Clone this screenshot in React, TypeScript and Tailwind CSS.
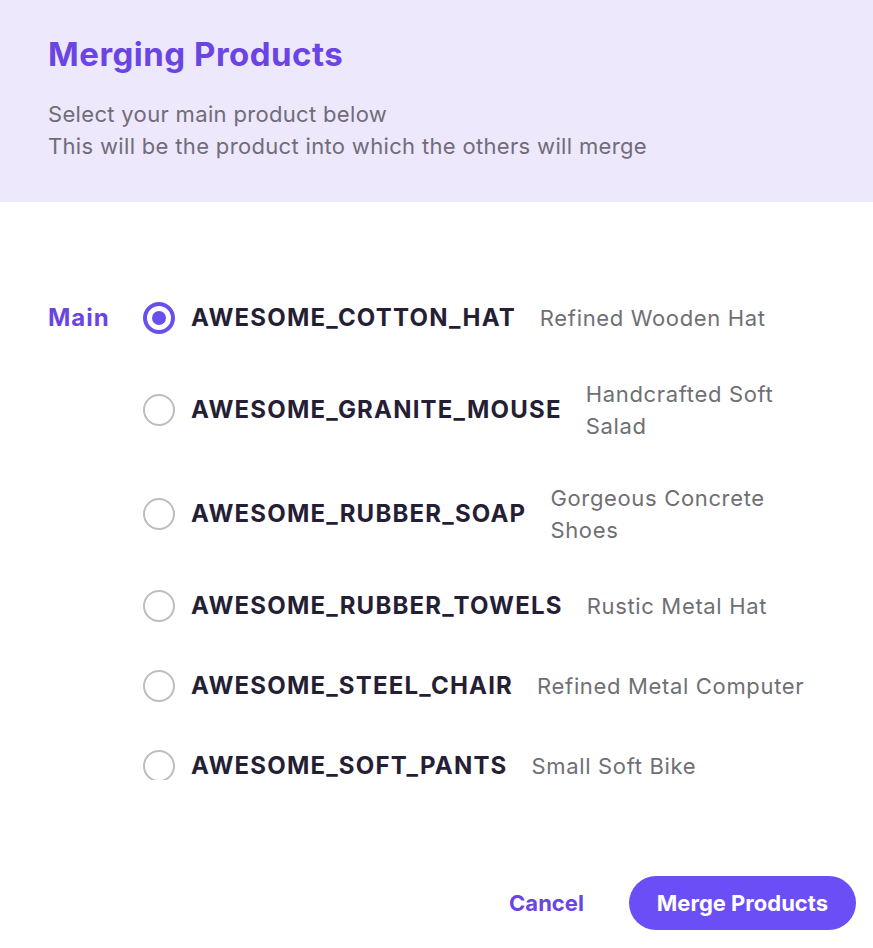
const products = [
  { code: "AWESOME_COTTON_HAT", name: "Refined Wooden Hat" },
  { code: "AWESOME_GRANITE_MOUSE", name: "Handcrafted Soft Salad" },
  { code: "AWESOME_RUBBER_SOAP", name: "Gorgeous Concrete Shoes" },
  { code: "AWESOME_RUBBER_TOWELS", name: "Rustic Metal Hat" },
  { code: "AWESOME_STEEL_CHAIR", name: "Refined Metal Computer" },
  { code: "AWESOME_SOFT_PANTS", name: "Small Soft Bike" },
];

function Radio({ checked }: { checked: boolean }) {
  if (checked) {
    return (
      <span className="flex h-8 w-8 shrink-0 items-center justify-center rounded-full border-4 border-[#6a4ff0]">
        <span className="h-[14px] w-[14px] rounded-full bg-[#6a4ff0]" />
      </span>
    );
  }
  return <span className="h-8 w-8 shrink-0 rounded-full border-2 border-[#bdbdbd]" />;
}

export default function App() {
  const selected = 0;

  return (
    <div className="flex h-[948px] w-[873px] flex-col bg-white font-['Inter',sans-serif]">
      <div className="bg-[#ede8fb] px-12 pb-10 pt-[34px]">
        <h1 className="text-[33px] font-bold leading-10 tracking-[0.015em] text-[#6a45e4]">
          Merging Products
        </h1>
        <div className="mt-[24px] text-[22px] leading-8 tracking-[0.015em] text-[#716c79]">
          <p>Select your main product below</p>
          <p>This will be the product into which the others will merge</p>
        </div>
      </div>

      <div className="mt-12 h-[530px] overflow-hidden pl-12 pr-[48px] pt-12">
        <div className="flex flex-col gap-10">
          {products.map((p, i) => (
            <div key={p.code} className="flex min-h-10 items-center">
              <span className="w-[95px] shrink-0 text-[24px] font-bold leading-7 tracking-[0.04em] text-[#6a45e4]">
                {i === 0 ? "Main" : ""}
              </span>
              <Radio checked={i === selected} />
              <span className="ml-4 shrink-0 text-[24px] font-bold leading-7 tracking-[0.05em] text-[#261e35]">
                {p.code}
              </span>
              <span className="ml-6 text-[22px] leading-8 tracking-[0.03em] text-[#6f6f74]">
                {p.name}
              </span>
            </div>
          ))}
        </div>
      </div>

      <div className="mt-auto flex items-center justify-end gap-[45px] pb-[18px] pr-[17px]">
        <button className="text-[22px] font-bold text-[#6a45e4]">Cancel</button>
        <button className="h-[54px] rounded-full bg-[#6b4ef6] px-7 text-[22px] font-bold text-white">
          Merge Products
        </button>
      </div>
    </div>
  );
}
